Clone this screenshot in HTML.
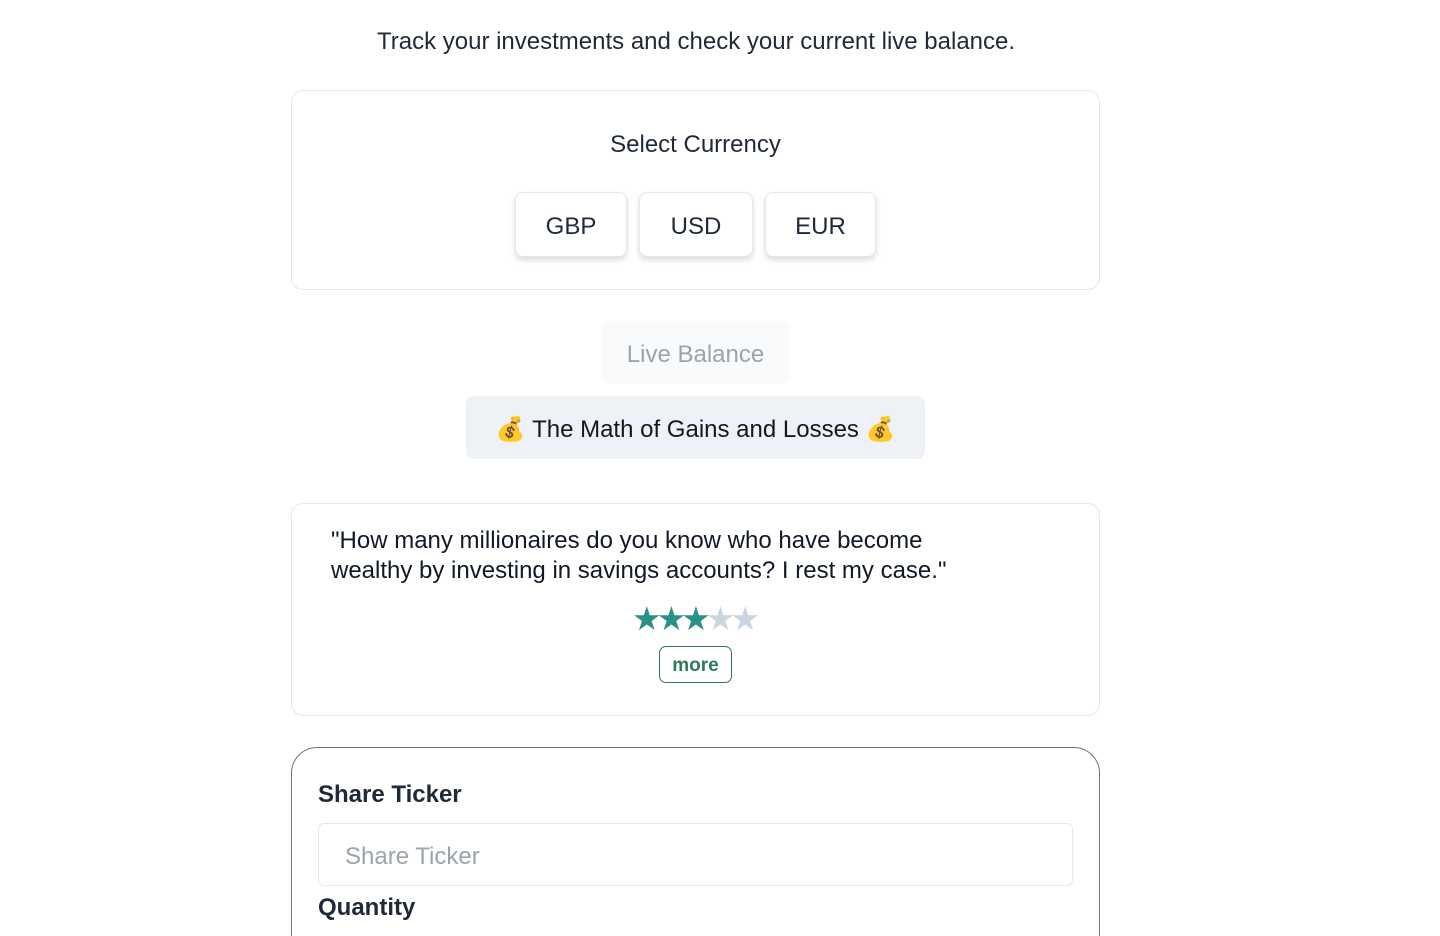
<!DOCTYPE html>
<html><head><meta charset="utf-8"><style>
*{box-sizing:border-box;margin:0;padding:0}
html,body{width:1440px;height:936px;overflow:hidden}
body{background:#fff;font-family:"Liberation Sans",sans-serif;color:#1f2937;position:relative}
.a{position:absolute}
.card{position:absolute;left:291px;width:809px;border:1px solid #e5e7eb;border-radius:12px}
.btn{position:absolute;top:192px;height:65px;border:1px solid #e5e7eb;border-radius:8px;box-shadow:0 3px 6px rgba(0,0,0,.15);font-size:24px;display:flex;align-items:center;justify-content:center;background:#fff;padding-top:4px}
.c{display:flex;align-items:center;justify-content:center}
</style></head><body>
<div class="a" style="left:0;width:1392px;top:28px;text-align:center;font-size:24px;color:#1f2937">Track your investments and check your current live balance.</div>
<div class="card" style="top:90px;height:200px"></div>
<div class="a" style="left:291px;width:809px;top:131px;text-align:center;font-size:24px">Select Currency</div>
<div class="btn" style="left:515px;width:112px">GBP</div>
<div class="btn" style="left:639px;width:114px">USD</div>
<div class="btn" style="left:765px;width:111px">EUR</div>
<div class="a c" style="left:601px;top:321px;width:189px;height:63px;background:#f8fafc;border-radius:8px;color:#9ca3af;font-size:24px;padding-top:4px">Live Balance</div>
<div class="a c" style="left:466px;top:396px;width:459px;height:63px;background:#eef2f6;border-radius:8px;font-size:24px;color:#111827;padding-top:4px">💰&nbsp;The Math of Gains and Losses&nbsp;💰</div>
<div class="card" style="top:503px;height:213px"></div>
<div class="a" style="left:331px;top:526px;width:660px;font-size:24px;line-height:30px;color:#111827">"How many millionaires do you know who have become wealthy by investing in savings accounts? I rest my case."</div>
<div class="a" style="left:632px;top:600px;font-size:33px;letter-spacing:-5px;line-height:38px"><span style="color:#2a9188">★★★</span><span style="color:#cbd5e1">★★</span></div>
<div class="a c" style="left:659px;top:646px;width:73px;height:37px;border:1px solid #2f7a5a;border-radius:7px;color:#2f7a5a;font-size:19px;font-weight:bold;padding-top:2px">more</div>
<div class="a" style="left:291px;top:747px;width:809px;height:189px;border:1px solid #6b7280;border-bottom:none;border-radius:26px 26px 0 0"></div>
<div class="a" style="left:318px;top:781px;font-size:24px;font-weight:bold;color:#1f2937">Share Ticker</div>
<div class="a" style="left:318px;top:823px;width:755px;height:63px;border:1px solid #e5e7eb;border-radius:6px;padding-left:26px;padding-top:4px;display:flex;align-items:center;font-size:24px;color:#9ca3af">Share Ticker</div>
<div class="a" style="left:318px;top:894px;font-size:24px;font-weight:bold;color:#1f2937">Quantity</div>
</body></html>
